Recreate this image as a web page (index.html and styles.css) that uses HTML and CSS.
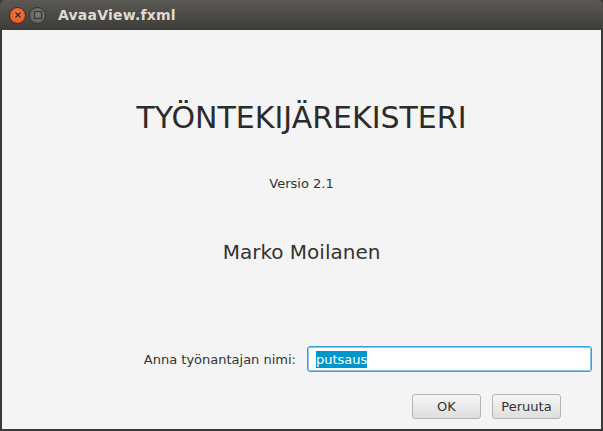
FILE: index.html
```html
<!DOCTYPE html>
<html>
<head>
<meta charset="utf-8">
<link rel="stylesheet" href="styles.css">
</head>
<body>
<div class="window">
  <div class="titlebar">
    <span class="btn-close"><svg width="10" height="10" viewBox="0 0 10 10"><path d="M2.5 2.5 L7.5 7.5 M7.5 2.5 L2.5 7.5" stroke="#3a2a22" stroke-width="1.4"/></svg></span>
    <span class="btn-max"><svg width="10" height="10" viewBox="0 0 10 10"><rect x="1.5" y="1.5" width="7" height="7" fill="none" stroke="#3a3a36" stroke-width="1.3"/></svg></span>
    <span class="title">AvaaView.fxml</span>
  </div>
  <div class="content">
    <h1 class="heading">TYÖNTEKIJÄREKISTERI</h1>
    <div class="version">Versio 2.1</div>
    <div class="author">Marko Moilanen</div>
    <div class="spacer"></div>
    <div class="form-row">
      <label class="label">Anna työnantajan nimi:</label>
      <div class="input"><span class="sel">putsaus</span></div>
    </div>
    <div class="buttons">
      <button class="button">OK</button>
      <button class="button">Peruuta</button>
    </div>
  </div>
</div>
</body>
</html>
```
FILE: styles.css
```css
html, body {
  margin: 0;
  padding: 0;
  width: 603px;
  height: 431px;
  overflow: hidden;
  background: #3a3935;
}
.window {
  display: flex;
  flex-direction: column;
  width: 603px;
  height: 431px;
  box-sizing: border-box;
  padding: 0 2px 2px 2px;
}
.titlebar {
  height: 30px;
  margin: 0 -2px;
  display: flex;
  align-items: center;
  padding-left: 9px;
  background: linear-gradient(#5b5954, #3d3c38);
  border-radius: 5px 5px 0 0;
  flex: none;
}
.btn-close, .btn-max {
  width: 17px;
  height: 17px;
  border-radius: 50%;
  display: flex;
  align-items: center;
  justify-content: center;
  margin-right: 3px;
  box-sizing: border-box;
}
.btn-close {
  background: radial-gradient(circle at 50% 40%, #f27a4c, #e0511f);
  border: 1px solid #3f2a22;
}
.btn-max {
  background: radial-gradient(circle at 50% 40%, #7f7d77, #5e5c57);
  border: 1px solid #34332f;
}
.title {
  margin-left: 9px;
  font-family: "DejaVu Sans", sans-serif;
  font-weight: bold;
  font-size: 14px;
  letter-spacing: 0.2px;
  color: #dfdbd2;
}
.content {
  flex: 1;
  background: #f4f4f4;
  display: flex;
  flex-direction: column;
  align-items: center;
  font-family: "DejaVu Sans", sans-serif;
  color: #333333;
}
.heading {
  margin: 70px 0 0 0;
  font-weight: normal;
  font-size: 30px;
  line-height: 36px;
  color: #2b2b2b;
}
.version {
  margin-top: 40px;
  font-size: 13px;
  line-height: 16px;
}
.author {
  margin-top: 47px;
  font-size: 20px;
  line-height: 26px;
}
.spacer { flex: 1; }
.form-row {
  align-self: stretch;
  display: flex;
  align-items: center;
  justify-content: flex-end;
  padding-right: 9px;
}
.label {
  font-size: 13px;
  margin-right: 11px;
}
.input {
  width: 285px;
  height: 26px;
  box-sizing: border-box;
  border: 1px solid #3a9fd6;
  box-shadow: 0 0 0 1px #8cc8ea inset;
  border-radius: 3px;
  background: #fff;
  display: flex;
  align-items: center;
  padding-left: 8px;
  font-size: 13px;
}
.sel {
  background: #0096c9;
  color: #fff;
  line-height: 17px;
}
.buttons {
  align-self: stretch;
  display: flex;
  justify-content: flex-end;
  gap: 11px;
  padding: 22px 40px 10px 0;
}
.button {
  width: 69px;
  height: 25px;
  border: 1px solid #b4b4b4;
  border-radius: 3px;
  background: linear-gradient(#f6f6f6, #dedede);
  font-family: "DejaVu Sans", sans-serif;
  font-size: 13px;
  color: #333;
  padding: 0;
}
```
